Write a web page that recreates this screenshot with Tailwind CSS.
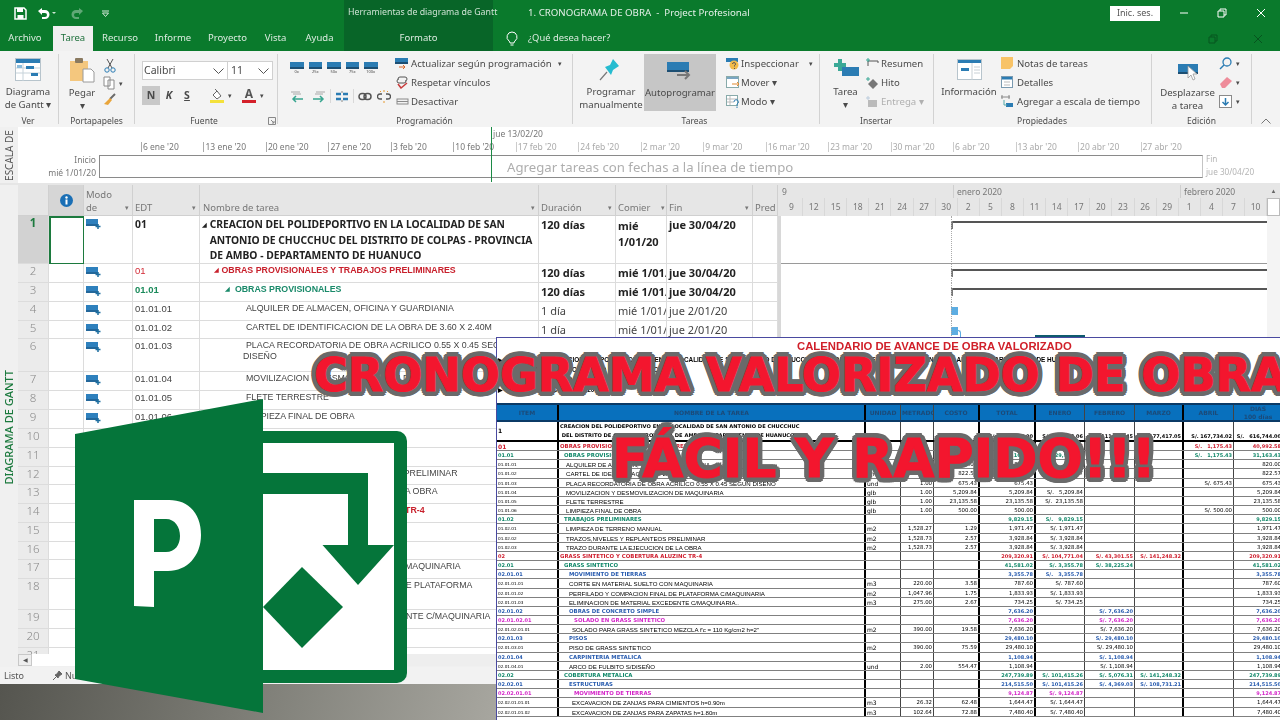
<!DOCTYPE html>
<html lang="es">
<head>
<meta charset="utf-8">
<title>Cronograma</title>
<script src="https://cdn.jsdelivr.net/npm/@tailwindcss/browser@4"></script>
</head>
<body class="m-0">
<div class="relative w-[1280px] h-[720px] overflow-hidden bg-[#f0f0f0] font-['Noto_Sans',sans-serif] text-[#444]">

  <!-- Title + tabs -->
  <header class="h-[51px] bg-[#0a7a2c] text-white blur-[0.4px]">
    <div class="flex h-[26px] items-center">
      <div class="flex w-[344px] items-center gap-[10px] pl-[14px]">
        <svg width="13" height="13" viewBox="0 0 13 13"><path d="M1 1h9l2 2v9H1z" fill="none" stroke="#fff" stroke-width="1.5"/><path d="M3 1h6v4H3zM3.500 8h6v4h-6z" fill="#fff"/></svg>
        <svg width="22" height="13" viewBox="0 0 22 13"><path d="M1 4l4-3v2h3a4 4 0 0 1 0 9H5V10h3a2 2 0 0 0 0-4H5v2z" fill="#fff"/><path d="M15 5h4l-2 2z" fill="#cfe6d5"/></svg>
        <svg width="20" height="13" viewBox="0 0 20 13" class="opacity-35"><path d="M14 4l-4-3v2H7a4 4 0 0 0 0 9h3V10H7a2 2 0 0 1 0-4h3v2z" fill="#fff"/></svg>
        <svg width="9" height="9" viewBox="0 0 9 9" class="ml-[2px]"><path d="M1 2h7M1.500 4h6L4.500 7.500z" stroke="#d5e8da" fill="none"/></svg>
      </div>
      <div class="flex h-full w-[149px] items-center whitespace-nowrap bg-[#086528] pl-[4px] text-[8.800px] text-[#cfe3d4]">Herramientas de diagrama de Gantt</div>
      <div class="ml-[35px] w-[582px] whitespace-nowrap text-[9.700px] text-[#e4f0e8]">1. CRONOGRAMA DE OBRA &nbsp;-&nbsp; Project Profesional</div>
      <div class="flex h-[15px] w-[50px] items-center justify-center bg-white text-[9px] text-[#555]">Inic. ses.</div>
      <div class="flex flex-1 items-center justify-around pl-[5px]">
        <svg width="10" height="10" viewBox="0 0 10 10"><path d="M1 5h8" stroke="#fff"/></svg>
        <svg width="10" height="10" viewBox="0 0 10 10"><path d="M1 3h6v6H1zM3 3V1h6v6H7" stroke="#fff" fill="none"/></svg>
        <svg width="10" height="10" viewBox="0 0 10 10"><path d="M1 1l8 8M9 1L1 9" stroke="#fff"/></svg>
      </div>
    </div>
    <nav class="flex h-[25px] items-center text-[9.500px] text-[#dcebe0]">
      <div class="w-[50px] text-center">Archivo</div>
      <div class="ml-[3px] flex h-full w-[40px] items-center justify-center bg-[#f0f0f0] text-[#1c6f3a]">Tarea</div>
      <div class="w-[54px] text-center">Recurso</div>
      <div class="w-[52px] text-center">Informe</div>
      <div class="w-[57px] text-center">Proyecto</div>
      <div class="w-[39px] text-center">Vista</div>
      <div class="w-[49px] text-center">Ayuda</div>
      <div class="flex h-full w-[149px] items-center justify-center bg-[#086528] text-[#dcebe0]">Formato</div>
      <svg class="ml-[13px]" width="12" height="15" viewBox="0 0 12 15"><path d="M6 1a5 5 0 0 0-3 9c.7.6 1 1.200 1 2h4c0-.8.3-1.400 1-2a5 5 0 0 0-3-9zM4.500 14h3" fill="none" stroke="#fff"/></svg>
      <div class="ml-[10px] text-[9.400px] text-[#dcebe0]">¿Qué desea hacer?</div>
      <div class="ml-auto flex w-[95px] items-center justify-around pl-[5px] opacity-30">
        <svg width="10" height="10" viewBox="0 0 10 10"><path d="M1 3h6v6H1zM3 3V1h6v6H7" stroke="#000" fill="none"/></svg>
        <svg width="10" height="10" viewBox="0 0 10 10"><path d="M1 1l8 8M9 1L1 9" stroke="#000"/></svg>
      </div>
    </nav>
  </header>

  <!-- Ribbon -->
  <section class="flex h-[76px] bg-[#f3f3f3] text-[9.600px] leading-[13px] text-[#4a4a4a] blur-[0.4px]">
    <!-- Ver -->
    <div class="flex w-[59px] flex-col border-r border-[#d2d2d2] mt-[3px] mb-[3px]">
      <div class="flex flex-1 flex-col items-center pr-[2px]">
        <svg class="mt-[4px]" width="26" height="23" viewBox="0 0 26 23"><rect x=".5" y=".5" width="25" height="22" fill="#fff" stroke="#b7c4cc"/><rect x="1" y="1" width="24" height="4" fill="#2b7cb3"/><path d="M8 5v18M1 10h24M1 15h24" stroke="#c7d3da"/><rect x="11" y="8" width="8" height="3" fill="#2b7cb3"/><rect x="16" y="15" width="7" height="3" fill="#2b7cb3"/><rect x="2" y="7" width="5" height="3" fill="#8bbcdc"/></svg>
        <div class="mt-[4px] text-center">Diagrama<br>de Gantt ▾</div>
      </div>
      <div class="-mb-[3px] h-[13px] pr-[2px] text-center text-[8.500px]">Ver</div>
    </div>
    <!-- Portapapeles -->
    <div class="flex w-[76px] flex-col border-r border-[#d2d2d2] mt-[3px] mb-[3px]">
      <div class="flex flex-1">
        <div class="flex w-[46px] flex-col items-center">
          <svg class="mt-[4px]" width="27" height="25" viewBox="0 0 27 25"><rect x="1" y="3" width="18" height="20" fill="#f4c77e"/><rect x="6" y="0" width="8" height="5" rx="1" fill="#8a7a60"/><path d="M14 11h8l3 3v10H14z" fill="#fff" stroke="#9a9a9a"/></svg>
          <div class="mt-[3px] text-center">Pegar<br>▾</div>
        </div>
        <div class="-ml-[2px] flex flex-col items-start gap-[3px] pt-[4px]">
          <svg width="14" height="15" viewBox="0 0 14 15"><path d="M4 1l5 9M10 1L5 10" stroke="#555" fill="none"/><circle cx="4" cy="12" r="2.200" fill="none" stroke="#2b7cb3"/><circle cx="10" cy="12" r="2.200" fill="none" stroke="#2b7cb3"/></svg>
          <div class="flex items-center gap-[4px]"><svg width="12" height="14" viewBox="0 0 12 14"><path d="M1 1h6v9H1zM5 4h6v9H5z" fill="#fff" stroke="#8a8a8a"/></svg><span class="text-[7px]">▾</span></div>
          <svg width="13" height="13" viewBox="0 0 13 13"><path d="M12 1L7 6" stroke="#6b6b6b" stroke-width="2"/><path d="M7 5l2 2-4 5-4-1z" fill="#e9a53b"/></svg>
        </div>
      </div>
      <div class="-mb-[3px] h-[13px] text-center text-[8.500px]">Portapapeles</div>
    </div>
    <!-- Fuente -->
    <div class="flex w-[143px] flex-col border-r border-[#d2d2d2] mt-[3px] mb-[3px]">
      <div class="flex flex-1 flex-col pl-[7px] pt-[7px]">
        <div class="flex h-[19px] w-[131px] border border-[#d0d0d0] bg-white text-[10.500px] leading-[17px]">
          <div class="flex w-[85px] items-center justify-between pl-[1px] pr-[3px] border-r border-[#d0d0d0]">Calibri<svg width="11" height="6" viewBox="0 0 11 6"><path d="M.5.5l5 5 5-5" fill="none" stroke="#555"/></svg></div>
          <div class="flex flex-1 items-center justify-between pl-[3px] pr-[3px]">11<svg width="11" height="6" viewBox="0 0 11 6"><path d="M.5.5l5 5 5-5" fill="none" stroke="#555"/></svg></div>
        </div>
        <div class="mt-[6px] flex h-[19px] items-center text-[10.500px]">
          <div class="flex h-[19px] w-[18px] items-center justify-center bg-[#c8c8c8] font-bold">N</div>
          <div class="w-[18px] text-center font-bold italic">K</div>
          <div class="w-[18px] text-center font-bold underline">S</div>
          <svg class="ml-[14px]" width="14" height="15" viewBox="0 0 14 15"><path d="M3 7l4-4 4 5-4 3z" fill="#fff" stroke="#666"/><path d="M5 1l3 3" stroke="#666"/><rect x="0" y="12" width="14" height="3" fill="#f4e13b"/></svg>
          <span class="ml-[4px] text-[7px]">▾</span>
          <div class="ml-[10px] flex w-[14px] flex-col items-center text-[12px] leading-[12px] font-bold text-[#555]">A<span class="h-[3px] w-[14px] bg-[#d4202a]"></span></div>
          <span class="ml-[4px] text-[7px]">▾</span>
        </div>
      </div>
      <div class="-mb-[3px] flex h-[13px] items-center text-[8.500px]"><span class="flex-1 pl-[5px] text-center">Fuente</span><svg class="mr-[1px]" width="8" height="8" viewBox="0 0 8 8"><path d="M.5.5h7v7h-7zM3 3l3 3M6 4v2H4" fill="none" stroke="#888"/></svg></div>
    </div>
    <!-- Programacion -->
    <div class="flex w-[295px] flex-col border-r border-[#d2d2d2] mt-[3px] mb-[3px]">
      <div class="flex flex-1">
        <div class="w-[117px] pl-[12px] pt-[8px]">
          <div class="flex gap-[5px]">
            <div class="flex w-[13.500px] flex-col items-center"><span class="h-[5px] w-full bg-[#2b7cb3]"></span><span class="h-[2px] w-full bg-[#1d4f73]"></span><span class="text-[4px] leading-[5px]">0x</span></div>
            <div class="flex w-[13.500px] flex-col items-center"><span class="h-[5px] w-full bg-[#2b7cb3]"></span><span class="h-[2px] w-full bg-[#1d4f73]"></span><span class="text-[4px] leading-[5px]">25x</span></div>
            <div class="flex w-[13.500px] flex-col items-center"><span class="h-[5px] w-full bg-[#2b7cb3]"></span><span class="h-[2px] w-full bg-[#1d4f73]"></span><span class="text-[4px] leading-[5px]">50x</span></div>
            <div class="flex w-[13.500px] flex-col items-center"><span class="h-[5px] w-full bg-[#2b7cb3]"></span><span class="h-[2px] w-full bg-[#1d4f73]"></span><span class="text-[4px] leading-[5px]">75x</span></div>
            <div class="flex w-[13.500px] flex-col items-center"><span class="h-[5px] w-full bg-[#2b7cb3]"></span><span class="h-[2px] w-full bg-[#1d4f73]"></span><span class="text-[4px] leading-[5px]">100x</span></div>
          </div>
          <div class="mt-[15px] flex items-center gap-[1px]">
            <svg width="14" height="13" viewBox="0 0 14 13"><path d="M1 2h9M3 4h8" stroke="#a8a8a8"/><path d="M13 9H3m3-3L3 9l3 3" fill="none" stroke="#37a58f" stroke-width="1.500"/></svg>
            <svg class="ml-[7px]" width="14" height="13" viewBox="0 0 14 13"><path d="M4 2h9M3 4h8" stroke="#a8a8a8"/><path d="M1 9h10m-3-3l3 3-3 3" fill="none" stroke="#37a58f" stroke-width="1.500"/></svg>
            <span class="mx-[3px] h-[14px] w-px bg-[#d8d8d8]"></span>
            <svg width="14" height="13" viewBox="0 0 14 13"><path d="M1 4h5M8 4h5M1 9h5M8 9h5" stroke="#2b7cb3" stroke-width="2.500"/><path d="M7 1v2M7 10v2" stroke="#888"/></svg>
            <span class="mx-[3px] h-[14px] w-px bg-[#d8d8d8]"></span>
            <svg width="14" height="13" viewBox="0 0 14 13"><rect x="1" y="3.500" width="7" height="6" rx="3" fill="none" stroke="#555" stroke-width="1.500"/><rect x="6" y="3.500" width="7" height="6" rx="3" fill="none" stroke="#555" stroke-width="1.500"/></svg>
            <svg class="ml-[4px]" width="14" height="13" viewBox="0 0 14 13"><path d="M5 4H3a2.500 2.500 0 0 0 0 5h2M9 4h2a2.500 2.500 0 0 1 0 5H9" fill="none" stroke="#555" stroke-width="1.300"/><path d="M7 0v2M7 11v2M3 1l1 1M11 1l-1 1" stroke="#e89a2e"/></svg>
          </div>
        </div>
        <div class="flex w-[177px] flex-col gap-[6px] pt-[3px]">
          <div class="flex h-[13px] items-center gap-[2px]"><svg width="14" height="13" viewBox="0 0 14 13"><rect x="0" y="1" width="13" height="5" fill="#2b7cb3"/><rect y="5" x="0" width="13" height="2" fill="#1d4f73"/><path d="M4 10h6m-2-2l2 2-2 2" stroke="#d9682b" fill="none"/></svg><span class="flex-1 whitespace-nowrap">Actualizar según programación</span><span class="pr-[10px] text-[7px]">▾</span></div>
          <div class="flex h-[13px] items-center gap-[2px]"><svg width="14" height="13" viewBox="0 0 14 13"><path d="M3 3a2 2 0 0 1 2-2h5a2 2 0 0 1 0 4M11 5a2 2 0 0 1-2 2H4a2 2 0 0 1 0-4" fill="none" stroke="#555"/><path d="M3 8l3 4 6-5" fill="none" stroke="#c83c3c" stroke-width="1.500"/></svg><span>Respetar vínculos</span></div>
          <div class="flex h-[13px] items-center gap-[2px]"><svg width="14" height="13" viewBox="0 0 14 13"><rect x="2" y="4" width="11" height="5" fill="none" stroke="#8a8a8a"/><path d="M2 6.500h11" stroke="#8a8a8a"/></svg><span>Desactivar</span></div>
        </div>
      </div>
      <div class="-mb-[3px] h-[13px] pr-[1px] text-center text-[8.500px]">Programación</div>
    </div>
    <!-- Tareas -->
    <div class="flex w-[247px] flex-col border-r border-[#d2d2d2] mt-[3px] mb-[3px]">
      <div class="flex flex-1 pl-[5px]">
        <div class="flex w-[66px] flex-col items-center pt-[4px]">
          <svg width="24" height="23" viewBox="0 0 24 23"><path d="M1 22l7-8" stroke="#777" stroke-width="1.200"/><path d="M6 9l6 8 2-5 6-4-6-7-3 6z" fill="#26bcd0"/></svg>
          <div class="mt-[4px] whitespace-nowrap text-center">Programar<br>manualmente</div>
        </div>
        <div class="flex h-[57px] w-[72px] flex-col items-center bg-[#c6c6c6] pt-[8px]">
          <svg width="26" height="19" viewBox="0 0 26 19"><rect width="22" height="8" fill="#2b7cb3"/><rect y="8" width="22" height="2" fill="#1d4f73"/><path d="M10 13h12m-4-4l4 4-4 4" fill="none" stroke="#777" stroke-width="2"/></svg>
          <div class="mt-[5px] whitespace-nowrap text-center">Autoprogramar</div>
        </div>
        <div class="ml-[10px] flex flex-col gap-[6px] pt-[3px]">
          <div class="flex h-[13px] items-center gap-[1px]"><svg width="14" height="13" viewBox="0 0 14 13"><rect y="1" width="12" height="4" fill="#2b7cb3"/><circle cx="8" cy="8" r="4.500" fill="#f2bb49"/><path d="M6.500 7a1.500 1.500 0 1 1 2 1.500V9.500M8.500 11v1" stroke="#555" fill="none"/></svg><span class="w-[67px]">Inspeccionar</span><span class="text-[7px]">▾</span></div>
          <div class="flex h-[13px] items-center gap-[1px]"><svg width="14" height="13" viewBox="0 0 14 13"><rect x=".5" y=".5" width="12" height="11" fill="#fff" stroke="#8aa"/><rect x="1" y="1" width="11" height="2" fill="#7aa6c2"/><path d="M6 8h7m-2-2l2 2-2 2" stroke="#e08a30" fill="none"/></svg><span>Mover ▾</span></div>
          <div class="flex h-[13px] items-center gap-[1px]"><svg width="14" height="13" viewBox="0 0 14 13"><rect x=".5" y=".5" width="11" height="10" fill="#fff" stroke="#8aa"/><path d="M1 4h10M1 7h7M4 1v9" stroke="#bbb"/><path d="M8 7a2.200 2.200 0 1 1 3 2v1.500M11 11.500v1.500" stroke="#2b7cb3" fill="none"/></svg><span>Modo ▾</span></div>
        </div>
      </div>
      <div class="-mb-[3px] h-[13px] pr-[3px] text-center text-[8.500px]">Tareas</div>
    </div>
    <!-- Insertar -->
    <div class="flex w-[114px] flex-col border-r border-[#d2d2d2] mt-[3px] mb-[3px]">
      <div class="flex flex-1 pl-[12px]">
        <div class="flex w-[27px] flex-col items-center pt-[4px]">
          <svg width="26" height="19" viewBox="0 0 26 19"><path d="M5 1h4v4h4v4H9v4H5V9H1V5h4z" fill="#3aa896"/><rect x="9" y="9" width="17" height="9" fill="#2b7cb3"/></svg>
          <div class="mt-[8px] text-center">Tarea<br>▾</div>
        </div>
        <div class="ml-[6px] flex flex-col gap-[6px] pt-[3px]">
          <div class="flex h-[13px] items-center gap-[2px]"><svg width="14" height="13" viewBox="0 0 14 13"><path d="M3 4h10M3 4v5M13 4v2" stroke="#555" fill="none"/><path d="M3 1v4M1 3h4" stroke="#3aa896"/></svg><span>Resumen</span></div>
          <div class="flex h-[13px] items-center gap-[2px]"><svg width="14" height="13" viewBox="0 0 14 13"><path d="M8 3l5 5-5 5-5-5z" fill="#777"/><path d="M3 1v4M1 3h4" stroke="#3aa896"/></svg><span>Hito</span></div>
          <div class="flex h-[13px] items-center gap-[2px] text-[#b0b0b0]"><svg width="14" height="13" viewBox="0 0 14 13"><path d="M3 5h9v7H3z" fill="#bbb"/><path d="M3 1v4M1 3h4" stroke="#bcd"/></svg><span>Entrega ▾</span></div>
        </div>
      </div>
      <div class="-mb-[3px] h-[13px] pr-[1px] text-center text-[8.500px]">Insertar</div>
    </div>
    <!-- Propiedades -->
    <div class="flex w-[218px] flex-col border-r border-[#d2d2d2] mt-[3px] mb-[3px]">
      <div class="flex flex-1">
        <div class="flex w-[70px] flex-col items-center pt-[5px]">
          <svg width="25" height="21" viewBox="0 0 25 21"><rect x=".5" y=".5" width="24" height="20" fill="#fff" stroke="#b7c4cc"/><rect x="1" y="1" width="23" height="3" fill="#2b7cb3"/><rect x="4" y="9" width="8" height="3" fill="#2b7cb3"/><path d="M15 4v17M17 8h6M17 11h6M17 14h6" stroke="#c8d0d5"/></svg>
          <div class="mt-[5px] whitespace-nowrap text-center">Información</div>
        </div>
        <div class="-ml-[3px] flex flex-col gap-[6px] pt-[3px]">
          <div class="flex h-[13px] items-center gap-[4px]"><svg width="12" height="13" viewBox="0 0 12 13"><path d="M0 0h12v9L9 12H0z" fill="#f8c367"/></svg><span>Notas de tareas</span></div>
          <div class="flex h-[13px] items-center gap-[4px]"><svg width="12" height="13" viewBox="0 0 12 13"><rect x=".5" y=".5" width="11" height="11" fill="#fff" stroke="#7a9ab0"/><rect x="1" y="1" width="10" height="2.500" fill="#2b7cb3"/><path d="M3 6h6M3 9h6" stroke="#bbb"/></svg><span>Detalles</span></div>
          <div class="flex h-[13px] items-center gap-[4px] whitespace-nowrap"><svg width="12" height="13" viewBox="0 0 12 13"><path d="M0 2h9M1 0v4M8 0v4" stroke="#888" fill="none"/><rect x="5" y="8" width="7" height="4" fill="#2b7cb3"/><path d="M3 5v5h3" stroke="#5aa" fill="none"/></svg><span>Agregar a escala de tiempo</span></div>
        </div>
      </div>
      <div class="-mb-[3px] h-[13px] pr-[1px] text-center text-[8.500px]">Propiedades</div>
    </div>
    <!-- Edición -->
    <div class="flex w-[100px] flex-col border-r border-[#d2d2d2] mt-[3px] mb-[3px]">
      <div class="flex flex-1">
        <div class="flex w-[70px] flex-col items-center pl-[1px] pt-[10px]">
          <svg width="24" height="19" viewBox="0 0 24 19"><rect x="2" y="0" width="20" height="8" fill="#2b7cb3"/><rect x="2" y="8" width="20" height="2" fill="#1d4f73"/><path d="M12 2v12l3-3 2 5 2-1-2-5h4z" fill="#fff" stroke="#999" stroke-width=".8"/></svg>
          <div class="mt-[3px] whitespace-nowrap text-center">Desplazarse<br>a tarea</div>
        </div>
        <div class="ml-[-3px] flex flex-col gap-[6px] pt-[3px]">
          <div class="flex h-[13px] items-center gap-[3px]"><svg width="14" height="13" viewBox="0 0 14 13"><circle cx="8" cy="5" r="4" fill="none" stroke="#2b7cb3" stroke-width="1.300"/><path d="M5 8l-4 4" stroke="#2b7cb3" stroke-width="1.500"/></svg><span class="text-[7px]">▾</span></div>
          <div class="flex h-[13px] items-center gap-[3px]"><svg width="14" height="13" viewBox="0 0 14 13"><path d="M1 8l7-7 5 4-7 7H3z" fill="#ee8c9a"/></svg><span class="text-[7px]">▾</span></div>
          <div class="flex h-[13px] items-center gap-[3px]"><svg width="14" height="13" viewBox="0 0 14 13"><rect x=".5" y=".5" width="12" height="12" fill="#fff" stroke="#8a8a8a"/><path d="M6.500 3v6m-3-2l3 3 3-3" stroke="#2b7cb3" stroke-width="1.500" fill="none"/></svg><span class="text-[7px]">▾</span></div>
        </div>
      </div>
      <div class="-mb-[3px] h-[13px] text-center text-[8.500px]">Edición</div>
    </div>
    <div class="flex flex-1 items-end justify-center pb-[3px]"><svg width="10" height="6" viewBox="0 0 10 6"><path d="M.5 5.500l4.500-4.500 4.500 4.500" stroke="#777" fill="none"/></svg></div>
  </section>

  <!-- Timeline -->
  <section class="relative flex h-[56px] bg-white text-[#777] blur-[0.4px]">
    <div class="flex w-[18px] items-center justify-center bg-[#f0f0f0]"><span class="-rotate-90 whitespace-nowrap text-[10px] text-[#555]">ESCALA DE</span></div>
    <div class="w-[81px] pr-[3px] pt-[26px] text-right text-[8.500px] leading-[13px]">Inicio<br>mié 1/01/20</div>
    <div class="w-[1104px]">
      <div class="flex h-[28px] items-end pb-[3px] pl-[42px] text-[8.500px] leading-[10px] whitespace-nowrap">
        <div class="w-[64.300px] border-l border-[#aaa] pl-[1px]">6 ene '20</div>
        <div class="w-[64.300px] border-l border-[#aaa] pl-[1px]">13 ene '20</div>
        <div class="w-[64.300px] border-l border-[#aaa] pl-[1px]">20 ene '20</div>
        <div class="w-[64.300px] border-l border-[#aaa] pl-[1px]">27 ene '20</div>
        <div class="w-[64.300px] border-l border-[#aaa] pl-[1px]">3 feb '20</div>
        <div class="w-[64.300px] border-l border-[#aaa] pl-[1px]">10 feb '20</div>
        <div class="w-[64.300px] border-l border-[#ccc] pl-[1px] text-[#aaa]">17 feb '20</div>
        <div class="w-[64.300px] border-l border-[#ccc] pl-[1px] text-[#aaa]">24 feb '20</div>
        <div class="w-[64.300px] border-l border-[#ccc] pl-[1px] text-[#aaa]">2 mar '20</div>
        <div class="w-[64.300px] border-l border-[#ccc] pl-[1px] text-[#aaa]">9 mar '20</div>
        <div class="w-[64.300px] border-l border-[#ccc] pl-[1px] text-[#aaa]">16 mar '20</div>
        <div class="w-[64.300px] border-l border-[#ccc] pl-[1px] text-[#aaa]">23 mar '20</div>
        <div class="w-[64.300px] border-l border-[#ccc] pl-[1px] text-[#aaa]">30 mar '20</div>
        <div class="w-[64.300px] border-l border-[#ccc] pl-[1px] text-[#aaa]">6 abr '20</div>
        <div class="w-[64.300px] border-l border-[#ccc] pl-[1px] text-[#aaa]">13 abr '20</div>
        <div class="w-[64.300px] border-l border-[#ccc] pl-[1px] text-[#aaa]">20 abr '20</div>
        <div class="w-[64.300px] border-l border-[#ccc] pl-[1px] text-[#aaa]">27 abr '20</div>
      </div>
      <div class="h-[23px] border border-[#8a8a8a] border-r-[#c4c4c4] pl-[407px] text-[13.200px] leading-[22px] text-[#aeaeae]">Agregar tareas con fechas a la línea de tiempo</div>
    </div>
    <div class="flex-1 pl-[3px] pt-[25px] text-[8.200px] leading-[13px] text-[#b5b5b5]">Fin<br>jue 30/04/20</div>
    <div class="absolute left-[491px] top-0 h-[55px] w-px bg-[#1c8a46]"></div>
    <div class="absolute left-[493px] top-[2px] text-[8.500px] leading-[10px]">jue 13/02/20</div>
  </section>
  <div class="h-[2px] bg-[#e6e6e6]"></div>

  <!-- Gantt -->
  <section class="relative flex h-[482px] bg-[#f0f0f0] blur-[0.4px]">
    <div class="flex w-[18px] items-start justify-center pt-[234px]"><span class="-rotate-90 whitespace-nowrap text-[11px] font-medium text-[#1c7a3e]">DIAGRAMA DE GANTT</span></div>
    <div class="flex-1 overflow-hidden text-[#444]
      [&>div]:grid [&>div]:grid-cols-[31px_35px_49px_67px_339px_77px_51px_86px_25px_3px_486px_13px]
      [&>div>div]:overflow-hidden [&>div>div]:whitespace-nowrap [&>div>div]:border-r [&>div>div]:border-b [&>div>div]:border-[#dcdcdc]
      [&>div>div]:bg-white [&>div>div:nth-child(1)]:bg-[#ebebeb] [&>div>div:nth-child(1)]:text-center [&>div>div:nth-child(1)]:text-[11.500px] [&>div>div:nth-child(1)]:leading-[14px] [&>div>div:nth-child(1)]:text-[#8a8a8a] [&>div>div:nth-child(1)]:font-light
      [&>div>div:nth-child(10)]:bg-[#d8d8d8] [&>div>div:nth-child(12)]:bg-[#f4f4f4] [&>div>div:nth-child(11)]:border-r-0 [&>div>div:nth-child(11)]:border-b-0 [&>div>div:nth-child(11)]:relative [&>div>div:nth-child(10)]:border-0 [&>div>div:nth-child(12)]:border-0
      [&>div>div:nth-child(6)]:text-[11px] [&>div>div:nth-child(7)]:text-[11px] [&>div>div:nth-child(8)]:text-[11px] [&>div>div:nth-child(6)]:leading-[17px] [&>div>div:nth-child(7)]:leading-[17px] [&>div>div:nth-child(8)]:leading-[17px] [&>div>div:nth-child(6)]:pl-[2px] [&>div>div:nth-child(7)]:pl-[2px] [&>div>div:nth-child(8)]:pl-[2px] [&>div>div:nth-child(3)]:pl-[2px] [&>div>div:nth-child(5)]:font-['Liberation_Sans',sans-serif] [&>div>div:nth-child(5)]:text-[8.800px] [&>div>div:nth-child(5)]:leading-[13px] [&>div>div:nth-child(4)]:font-['Liberation_Sans',sans-serif] [&>div>div:nth-child(4)]:text-[9.500px] [&>div>div:nth-child(4)]:leading-[13px] [&>div>div:nth-child(4)]:pl-[2px]
      [&_svg.mode]:mt-[3px]">

      <!-- column header -->
      <div class="h-[31px] [&>div]:!bg-[#e6e6e6] [&>div]:!font-['Noto_Sans',sans-serif] [&>div]:!text-[9.500px] [&>div]:!text-[#777] [&>div]:!leading-[13px] [&>div]:!border-[#d0d0d0]">
        <div></div>
        <div><div class="flex h-full w-full items-center justify-center bg-[#d6d6d6]"><svg width="13" height="13" viewBox="0 0 13 13"><circle cx="6.500" cy="6.500" r="6.500" fill="#1a6fb5"/><rect x="5.500" y="5.500" width="2" height="5" fill="#fff"/><circle cx="6.500" cy="3.500" r="1.200" fill="#fff"/></svg></div></div>
        <div class="flex items-end justify-between pr-[3px] pb-[1px]"><span>Modo<br>de</span><span class="text-[7px]">▾</span></div>
        <div class="flex items-end justify-between pr-[3px] pb-[1px]"><span>EDT</span><span class="text-[7px]">▾</span></div>
        <div class="flex items-end justify-between pl-[3px] pr-[3px] pb-[1px]"><span>Nombre de tarea</span><span class="text-[7px]">▾</span></div>
        <div class="flex items-end justify-between pr-[3px] pb-[1px]"><span>Duración</span><span class="text-[7px]">▾</span></div>
        <div class="flex items-end justify-between pr-[1px] pb-[1px]"><span>Comier</span><span class="text-[7px]">▾</span></div>
        <div class="flex items-end justify-between pr-[3px] pb-[1px]"><span>Fin</span><span class="text-[7px]">▾</span></div>
        <div class="flex items-end pl-[2px] pb-[1px]">Pred</div>
        <div></div>
        <div class="flex flex-col !border-0">
          <div class="flex h-[13px] text-[8.500px]"><span class="w-[172px] pl-[1px]">9</span><span class="w-[227px] border-l border-[#cfcfcf] pl-[3px]">enero 2020</span><span class="border-l border-[#cfcfcf] pl-[3px]">febrero 2020</span></div>
          <div class="flex flex-1 text-center text-[8.500px] [&>span]:flex-1 [&>span]:border-r [&>span]:border-[#d8d8d8] [&>span]:leading-[18px]"><span>9</span><span>12</span><span>15</span><span>18</span><span>21</span><span>24</span><span>27</span><span>30</span><span>2</span><span>5</span><span>8</span><span>11</span><span>14</span><span>17</span><span>20</span><span>23</span><span>26</span><span>29</span><span>1</span><span>4</span><span>7</span><span>10</span></div>
        </div>
        <div class="!border-0 text-center"><span class="block h-[13px] text-[6px] leading-[13px] text-[#666]">▲</span><span class="block h-[18px] border border-[#bbb] bg-white"></span></div>
      </div>

      <!-- row 1 -->
      <div class="h-[48px] [&>div]:border-b-[#9a9a9a]">
        <div class="!bg-[#d2d2d2] !font-bold !text-[#1c7a3e]">1</div>
        <div class="border-2 !border-[#1c7a3e]"></div>
        <div class="pl-[3px]"><svg class="mode" width="15" height="11" viewBox="0 0 15 11"><rect width="12" height="5" fill="#2e80bd"/><rect y="5" width="12" height="2" fill="#23679a"/><path d="M12 5v5M9.500 7.500h5" stroke="#1d6ea0" stroke-width="1.500"/></svg></div>
        <div class="!font-['Noto_Sans',sans-serif] !text-[10.300px] font-bold pt-[2px] text-[#222]">01</div>
        <div class="!font-['Noto_Sans',sans-serif] !text-[10.300px] font-bold text-[#222] !leading-[15.500px] pt-[1px] pl-[2px] !whitespace-nowrap"><span class="text-[6px] align-[1px]">◢</span> <span class="inline-block align-top">CREACION DEL POLIDEPORTIVO EN LA LOCALIDAD DE SAN<br>ANTONIO DE CHUCCHUC DEL DISTRITO DE COLPAS - PROVINCIA<br>DE AMBO - DEPARTAMENTO DE HUANUCO</span></div>
        <div class="font-bold text-[#222]">120 días</div>
        <div class="font-bold !leading-[15.500px] pt-[2px] text-[#222]">mié<br>1/01/20</div>
        <div class="font-bold text-[#222]">jue 30/04/20</div>
        <div></div><div></div>
        <div><span class="absolute left-[170px] top-[5px] h-[2px] w-[316px] bg-[#555]"></span><span class="absolute left-[169.500px] top-[5px] h-[8px] w-[2px] bg-[#777]"></span><span class="absolute left-[170px] top-0 h-[48px] border-l border-dotted border-[#aaa]"></span><span class="absolute inset-x-0 bottom-0 h-px bg-[#9a9a9a]"></span></div>
        <div></div>
      </div>

      <!-- row 2 -->
      <div class="h-[18.500px]">
        <div>2</div><div></div>
        <div class="pl-[3px]"><svg class="mode" width="15" height="11" viewBox="0 0 15 11"><rect width="12" height="5" fill="#2e80bd"/><rect y="5" width="12" height="2" fill="#23679a"/><path d="M12 5v5M9.500 7.500h5" stroke="#1d6ea0" stroke-width="1.500"/></svg></div>
        <div class="text-[#d22a35]">01</div>
        <div class="pl-[14px] font-bold text-[#c8202c]"><span class="text-[6px] align-[1px]">◢</span> OBRAS PROVISIONALES Y TRABAJOS PRELIMINARES</div>
        <div class="font-bold text-[#222]">120 días</div><div class="font-bold text-[#222]">mié 1/01/</div><div class="font-bold text-[#222]">jue 30/04/20</div>
        <div></div><div></div>
        <div><span class="absolute left-[170px] top-[5px] h-[2px] w-[316px] bg-[#555]"></span><span class="absolute left-[169.500px] top-[5px] h-[8px] w-[2px] bg-[#777]"></span><span class="absolute left-[170px] top-0 h-[19px] border-l border-dotted border-[#aaa]"></span></div>
        <div></div>
      </div>
      <!-- row 3 -->
      <div class="h-[19px]">
        <div>3</div><div></div>
        <div class="pl-[3px]"><svg class="mode" width="15" height="11" viewBox="0 0 15 11"><rect width="12" height="5" fill="#2e80bd"/><rect y="5" width="12" height="2" fill="#23679a"/><path d="M12 5v5M9.500 7.500h5" stroke="#1d6ea0" stroke-width="1.500"/></svg></div>
        <div class="font-bold text-[#1a8a5a]">01.01</div>
        <div class="pl-[25px] font-bold text-[#1a8a6a]"><span class="text-[6px] align-[1px]">◢</span> &nbsp;OBRAS PROVISIONALES</div>
        <div class="font-bold text-[#222]">120 días</div><div class="font-bold text-[#222]">mié 1/01/</div><div class="font-bold text-[#222]">jue 30/04/20</div>
        <div></div><div></div>
        <div><span class="absolute left-[170px] top-[5px] h-[2px] w-[316px] bg-[#555]"></span><span class="absolute left-[169.500px] top-[5px] h-[8px] w-[2px] bg-[#777]"></span><span class="absolute left-[170px] top-0 h-[19px] border-l border-dotted border-[#aaa]"></span></div>
        <div></div>
      </div>
      <!-- row 4 -->
      <div class="h-[19px]">
        <div>4</div><div></div>
        <div class="pl-[3px]"><svg class="mode" width="15" height="11" viewBox="0 0 15 11"><rect width="12" height="5" fill="#2e80bd"/><rect y="5" width="12" height="2" fill="#23679a"/><path d="M12 5v5M9.500 7.500h5" stroke="#1d6ea0" stroke-width="1.500"/></svg></div>
        <div>01.01.01</div>
        <div class="pl-[46px]">ALQUILER DE ALMACEN, OFICINA Y GUARDIANIA</div>
        <div>1 día</div><div>mié 1/01/</div><div>jue 2/01/20</div>
        <div></div><div></div>
        <div><span class="absolute left-[170px] top-[5px] h-[8px] w-[7px] bg-[#5dade2]"></span><span class="absolute left-[170px] top-0 h-[19px] border-l border-dotted border-[#aaa]"></span></div>
        <div></div>
      </div>
      <!-- row 5 -->
      <div class="h-[18.500px]">
        <div>5</div><div></div>
        <div class="pl-[3px]"><svg class="mode" width="15" height="11" viewBox="0 0 15 11"><rect width="12" height="5" fill="#2e80bd"/><rect y="5" width="12" height="2" fill="#23679a"/><path d="M12 5v5M9.500 7.500h5" stroke="#1d6ea0" stroke-width="1.500"/></svg></div>
        <div>01.01.02</div>
        <div class="pl-[46px]">CARTEL DE IDENTIFICACION DE LA OBRA DE 3.60 X 2.40M</div>
        <div>1 día</div><div>mié 1/01/</div><div>jue 2/01/20</div>
        <div></div><div></div>
        <div><span class="absolute left-[170px] top-[6px] h-[8px] w-[7px] bg-[#5dade2]"></span><span class="absolute left-[177px] top-[9px] h-[9px] w-[3px] rounded-tr-sm border-t border-r border-[#5dade2]"></span><span class="absolute left-[170px] top-0 h-[19px] border-l border-dotted border-[#aaa]"></span></div>
        <div></div>
      </div>
      <!-- row 6 -->
      <div class="h-[33px]">
        <div>6</div><div></div>
        <div class="pl-[3px]"><svg class="mode" width="15" height="11" viewBox="0 0 15 11"><rect width="12" height="5" fill="#2e80bd"/><rect y="5" width="12" height="2" fill="#23679a"/><path d="M12 5v5M9.500 7.500h5" stroke="#1d6ea0" stroke-width="1.500"/></svg></div>
        <div>01.01.03</div>
        <div class="pl-[46px] !leading-[11px] pt-[1px]">PLACA RECORDATORIA DE OBRA ACRILICO 0.55 X 0.45 SEGÚN<br><span class="-ml-[3px]">DISEÑO</span></div>
        <div></div><div></div><div></div><div></div><div></div><div></div><div></div>
      </div>
      <!-- row 7 -->
      <div class="h-[19px]">
        <div>7</div><div></div>
        <div class="pl-[3px]"><svg class="mode" width="15" height="11" viewBox="0 0 15 11"><rect width="12" height="5" fill="#2e80bd"/><rect y="5" width="12" height="2" fill="#23679a"/><path d="M12 5v5M9.500 7.500h5" stroke="#1d6ea0" stroke-width="1.500"/></svg></div>
        <div>01.01.04</div>
        <div class="pl-[46px]">MOVILIZACION Y DESMOVILIZACION DE MAQUINARIA</div>
        <div></div><div></div><div></div><div></div><div></div><div></div><div></div>
      </div>
      <!-- row 8 -->
      <div class="h-[18.500px]">
        <div>8</div><div></div>
        <div class="pl-[3px]"><svg class="mode" width="15" height="11" viewBox="0 0 15 11"><rect width="12" height="5" fill="#2e80bd"/><rect y="5" width="12" height="2" fill="#23679a"/><path d="M12 5v5M9.500 7.500h5" stroke="#1d6ea0" stroke-width="1.500"/></svg></div>
        <div>01.01.05</div>
        <div class="pl-[46px]">FLETE TERRESTRE</div>
        <div></div><div></div><div></div><div></div><div></div><div></div><div></div>
      </div>
      <!-- row 9 -->
      <div class="h-[19px]">
        <div>9</div><div></div>
        <div class="pl-[3px]"><svg class="mode" width="15" height="11" viewBox="0 0 15 11"><rect width="12" height="5" fill="#2e80bd"/><rect y="5" width="12" height="2" fill="#23679a"/><path d="M12 5v5M9.500 7.500h5" stroke="#1d6ea0" stroke-width="1.500"/></svg></div>
        <div>01.01.06</div>
        <div class="pl-[46px]">LIMPIEZA FINAL DE OBRA</div>
        <div></div><div></div><div></div><div></div><div></div><div></div><div></div>
      </div>
      <div class="h-[19px]"><div>10</div><div></div><div></div><div>01.02</div><div class="pl-[24px] font-bold text-[#1a8a6a]">TRABAJOS PRELIMINARES</div><div></div><div></div><div></div><div></div><div></div><div></div><div></div></div>
      <div class="h-[19px]"><div>11</div><div></div><div></div><div>01.02.01</div><div class="pl-[46px]">LIMPIEZA DE TERRENO MANUAL</div><div></div><div></div><div></div><div></div><div></div><div></div><div></div></div>
      <div class="h-[18.500px]"><div>12</div><div></div><div></div><div>01.02.02</div><div class="pl-[54px]">TRAZOS, NIVELES Y REPLANTEOS PRELIMINAR</div><div></div><div></div><div></div><div></div><div></div><div></div><div></div></div>
      <div class="h-[19px]"><div>13</div><div></div><div></div><div>01.02.03</div><div class="pl-[42px]">TRAZO DURANTE LA EJECUCION DE LA OBRA</div><div></div><div></div><div></div><div></div><div></div><div></div><div></div></div>
      <div class="h-[18.500px]"><div>14</div><div></div><div></div><div>02</div><div class="pl-[15px] font-bold text-[#c8202c]">GRASS SINTETICO Y COBERTURA ALUZINC TR-4</div><div></div><div></div><div></div><div></div><div></div><div></div><div></div></div>
      <div class="h-[19px]"><div>15</div><div></div><div></div><div>02.01</div><div class="pl-[24px] font-bold text-[#1a8a6a]">GRASS SINTETICO</div><div></div><div></div><div></div><div></div><div></div><div></div><div></div></div>
      <div class="h-[18.500px]"><div>16</div><div></div><div></div><div>02.01.01</div><div class="pl-[35px] font-bold text-[#2a5db0]">MOVIMIENTO DE TIERRAS</div><div></div><div></div><div></div><div></div><div></div><div></div><div></div></div>
      <div class="h-[19px]"><div>17</div><div></div><div></div><div>02.01.01.01</div><div class="pl-[53px]">CORTE EN MATERIAL SUELTO CON MAQUINARIA</div><div></div><div></div><div></div><div></div><div></div><div></div><div></div></div>
      <div class="h-[31px]"><div>18</div><div></div><div></div><div>02.01.01.02</div><div class="pl-[56px]">PERFILADO Y COMPACION FINAL DE PLATAFORMA</div><div></div><div></div><div></div><div></div><div></div><div></div><div></div></div>
      <div class="h-[19px]"><div>19</div><div></div><div></div><div>02.01.01.03</div><div class="pl-[50px]">ELIMINACION DE MATERIAL EXCEDENTE C/MAQUINARIA</div><div></div><div></div><div></div><div></div><div></div><div></div><div></div></div>
      <div class="h-[19px]"><div>20</div><div></div><div></div><div></div><div></div><div></div><div></div><div></div><div></div><div></div><div></div><div></div></div>
      <div class="h-[9px]"><div>21</div><div></div><div></div><div></div><div></div><div></div><div></div><div></div><div></div><div></div><div></div><div></div></div>
    </div>
    <!-- horizontal scroll -->
    <div class="absolute bottom-[1px] left-[18px] flex h-[12px] w-[1262px] items-center bg-[#eeeeee]"><span class="flex h-[12px] w-[14px] items-center justify-center border border-[#c8c8c8] text-[6px] leading-[10px] text-[#555]">◀</span><span class="h-[12px] w-[300px] bg-white"></span></div>
  </section>

  <!-- Status -->
  <footer class="flex h-[17px] items-center bg-[#f2f2f2] pl-[4px] text-[9px] text-[#555] blur-[0.4px]">
    <span class="w-[48px]">Listo</span>
    <svg width="11" height="11" viewBox="0 0 11 11"><path d="M1 10l3-3M3 5l3 3 1-2 3-2-3-3-2 3z" fill="#666" stroke="#666"/></svg>
    <span class="ml-[2px]">Nuevas tareas</span>
  </footer>
  <div class="h-[36px] bg-[linear-gradient(105deg,#55554f,#7a7a73_18%,#a9a8a1_40%,#bdbcb5_60%,#a8a7a0)]"></div>

  <!-- Excel sheet overlay -->
  <div class="absolute left-[496px] top-[337px] h-[383px] w-[784px] overflow-hidden border-l border-t border-[#4a4aa0] bg-white font-['Liberation_Sans',sans-serif] text-black blur-[0.4px]">
    <div class="h-[15px] pl-[300px] pt-[1px] text-[11.300px] font-bold leading-[14px] text-[#d0202a]">CALENDARIO DE AVANCE DE OBRA VALORIZADO</div>
    <div class="h-[50px] pl-[1px] text-[6.400px] font-bold leading-[10px] whitespace-nowrap">
      <div class="pt-[2px]">▶ &nbsp;PROYECTO &nbsp;: CREACION DEL POLIDEPORTIVO EN LA LOCALIDAD DE SAN ANTONIO DE CHUCCHUC DEL DISTRITO DE COLPAS - PROVINCIA DE AMBO - DEPARTAMENTO DE HUANUCO</div>
      <div>▶ &nbsp;PROPIETARIO : MUNICIPALIDAD DISTRITAL DE COLPAS</div>
      <div>▶ &nbsp;LUGAR : LOCALIDAD DE SAN ANTONIO DE CHUCCHUC</div>
      <div>▶ &nbsp;PLAZO DE EJECUCION : 120 DIAS</div>
    </div>
    <!-- sheet table -->
    <div class="font-['DejaVu_Sans',sans-serif] text-[5.400px] leading-[9px]
      [&>div]:grid [&>div]:grid-cols-[62px_307px_35px_33px_46px_56px_49px_50px_49px_50px_49px]
      [&>div>span]:overflow-hidden [&>div>span]:whitespace-nowrap [&>div>span]:border-r [&>div>span]:border-[#444] [&>div>span]:px-[1px] [&>div>span]:text-right
      [&>div>span:nth-child(1)]:text-left [&>div>span:nth-child(2)]:text-left [&>div>span:nth-child(3)]:text-left
      [&>div>span:nth-child(1)]:border-r-2 [&>div>span:nth-child(1)]:border-black [&>div>span:nth-child(2)]:border-r-2 [&>div>span:nth-child(2)]:border-black [&>div>span:nth-child(5)]:border-r-2 [&>div>span:nth-child(5)]:border-black [&>div>span:nth-child(6)]:border-r-2 [&>div>span:nth-child(6)]:border-black [&>div>span:nth-child(9)]:border-r-2 [&>div>span:nth-child(9)]:border-black
      [&>div]:border-b [&>div]:border-[#808080] [&>div]:h-[9.170px]
      [&>div>span:nth-child(3)]:text-[6px]
      [&>div:not(.font-bold)>span:nth-child(1)]:text-[4.200px] [&>div:not(.font-bold)>span:nth-child(2)]:font-['Liberation_Sans',sans-serif] [&>div:not(.font-bold)>span:nth-child(2)]:text-[6.100px]
      [&>div.font-bold>span]:text-[5px] [&>div.font-bold>span:nth-child(2)]:text-[5.400px]">
      <div class="!h-[19px] !border-y-2 !border-[#0b3a66] bg-[#0870bd] font-bold text-[#1c4a78] [&>span]:!text-center [&>span]:!text-[6px] [&>span]:leading-[16px]">
        <span>ITEM</span><span>NOMBRE DE LA TAREA</span><span>UNIDAD</span><span>METRADO</span><span>COSTO</span><span>TOTAL</span><span>ENERO</span><span>FEBRERO</span><span>MARZO</span><span>ABRIL</span><span class="!text-left !leading-[8px]">DIAS<br>100 días</span>
      </div>
      <div class="!h-[20px] !border-b-2 !border-black font-bold [&>span]:leading-[18px]">
        <span class="!text-[6px]">1</span><span class="!text-[5.150px] !leading-[9px]">CREACION DEL POLIDEPORTIVO EN LA LOCALIDAD DE SAN ANTONIO DE CHUCCHUC<br>&nbsp;DEL DISTRITO DE COLPAS - PROVINCIA DE AMBO - DEPARTAMENTO DE HUANUCO</span><span></span><span></span><span></span><span class="!leading-[28px]">S/. &nbsp;&nbsp;616,744.00</span><span class="!leading-[28px]">S/. 159,268.06</span><span class="!leading-[28px]">S/. 111,024.45</span><span class="!leading-[28px]">S/. 177,417.05</span><span class="!leading-[28px]">S/. 167,734.02</span><span class="!leading-[28px]">S/. &nbsp;&nbsp;616,744.00</span>
      </div>
      <div class="font-bold text-[#cf2030]"><span class="!text-[6px]">01</span><span>OBRAS PROVISIONALES Y TRABAJOS PRELIMINARES</span><span></span><span></span><span></span><span>40,992.58</span><span>39,817.15</span><span></span><span></span><span>S/. &nbsp;&nbsp;1,175.43</span><span>40,992.58</span></div>
      <div class="font-bold text-[#12896a]"><span>01.01</span><span class="pl-[5px]!">OBRAS PROVISIONALES</span><span></span><span></span><span></span><span>31,163.43</span><span>29,987.99</span><span></span><span></span><span>S/. &nbsp;&nbsp;1,175.43</span><span>31,163.43</span></div>
      <div><span>01.01.01</span><span class="pl-[7px]!">ALQUILER DE ALMACEN, OFICINA Y GUARDIANIA</span><span>und</span><span>1.00</span><span>820.00</span><span>820.00</span><span>820.00</span><span></span><span></span><span></span><span>820.00</span></div>
      <div><span>01.01.02</span><span class="pl-[7px]!">CARTEL DE IDENTIFICACION DE LA OBRA DE 3.60 X 2.40M</span><span>und</span><span>1.00</span><span>822.57</span><span>822.57</span><span>822.57</span><span></span><span></span><span></span><span>822.57</span></div>
      <div><span>01.01.03</span><span class="pl-[7px]!">PLACA RECORDATORIA DE OBRA ACRILICO 0.55 X 0.45 SEGUN DISEÑO</span><span>und</span><span>1.00</span><span>675.43</span><span>675.43</span><span></span><span></span><span></span><span>S/. 675.43</span><span>675.43</span></div>
      <div><span>01.01.04</span><span class="pl-[7px]!">MOVILIZACION Y DESMOVILIZACION DE MAQUINARIA</span><span>glb</span><span>1.00</span><span>5,209.84</span><span>5,209.84</span><span>S/. &nbsp;&nbsp;5,209.84</span><span></span><span></span><span></span><span>5,209.84</span></div>
      <div><span>01.01.05</span><span class="pl-[7px]!">FLETE TERRESTRE</span><span>glb</span><span>1.00</span><span>23,135.58</span><span>23,135.58</span><span>S/. &nbsp;23,135.58</span><span></span><span></span><span></span><span>23,135.58</span></div>
      <div><span>01.01.06</span><span class="pl-[7px]!">LIMPIEZA FINAL DE OBRA</span><span>glb</span><span>1.00</span><span>500.00</span><span>500.00</span><span></span><span></span><span></span><span>S/. 500.00</span><span>500.00</span></div>
      <div class="font-bold text-[#12896a]"><span>01.02</span><span class="pl-[5px]!">TRABAJOS PRELIMINARES</span><span></span><span></span><span></span><span>9,829.15</span><span>S/. &nbsp;&nbsp;9,829.15</span><span></span><span></span><span></span><span>9,829.15</span></div>
      <div><span>01.02.01</span><span class="pl-[7px]!">LIMPIEZA DE TERRENO MANUAL</span><span>m2</span><span>1,528.27</span><span>1.29</span><span>1,971.47</span><span>S/. 1,971.47</span><span></span><span></span><span></span><span>1,971.47</span></div>
      <div><span>01.02.02</span><span class="pl-[7px]!">TRAZOS,NIVELES Y REPLANTEOS PRELIMINAR</span><span>m2</span><span>1,528.73</span><span>2.57</span><span>3,928.84</span><span>S/. 3,928.84</span><span></span><span></span><span></span><span>3,928.84</span></div>
      <div><span>01.02.03</span><span class="pl-[7px]!">TRAZO DURANTE LA EJECUCION DE LA OBRA</span><span>m2</span><span>1,528.73</span><span>2.57</span><span>3,928.84</span><span>S/. 3,928.84</span><span></span><span></span><span></span><span>3,928.84</span></div>
      <div class="font-bold text-[#cf2030]"><span>02</span><span>GRASS SINTETICO Y COBERTURA ALUZINC TR-4</span><span></span><span></span><span></span><span>209,320.91</span><span>S/. 104,771.04</span><span>S/. 43,301.55</span><span>S/. 141,248.32</span><span></span><span>209,320.91</span></div>
      <div class="font-bold text-[#12896a]"><span>02.01</span><span class="pl-[5px]!">GRASS SINTETICO</span><span></span><span></span><span></span><span>41,581.02</span><span>S/. 3,355.78</span><span>S/. 38,225.24</span><span></span><span></span><span>41,581.02</span></div>
      <div class="font-bold text-[#2a5db0]"><span>02.01.01</span><span class="pl-[10px]!">MOVIMIENTO DE TIERRAS</span><span></span><span></span><span></span><span>3,355.78</span><span>S/. &nbsp;&nbsp;3,355.78</span><span></span><span></span><span></span><span>3,355.78</span></div>
      <div><span>02.01.01.01</span><span class="pl-[10px]!">CORTE EN MATERIAL SUELTO CON MAQUINARIA</span><span>m3</span><span>220.00</span><span>3.58</span><span>787.60</span><span>S/. 787.60</span><span></span><span></span><span></span><span>787.60</span></div>
      <div><span>02.01.01.02</span><span class="pl-[10px]!">PERFILADO Y COMPACION FINAL DE PLATAFORMA C/MAQUINARIA</span><span>m2</span><span>1,047.96</span><span>1.75</span><span>1,833.93</span><span>S/. 1,833.93</span><span></span><span></span><span></span><span>1,833.93</span></div>
      <div><span>02.01.01.03</span><span class="pl-[10px]!">ELIMINACION DE MATERIAL EXCEDENTE C/MAQUINARIA..</span><span>m3</span><span>275.00</span><span>2.67</span><span>734.25</span><span>S/. 734.25</span><span></span><span></span><span></span><span>734.25</span></div>
      <div class="font-bold text-[#2a5db0]"><span>02.01.02</span><span class="pl-[10px]!">OBRAS DE CONCRETO SIMPLE</span><span></span><span></span><span></span><span>7,636.20</span><span></span><span>S/. 7,636.20</span><span></span><span></span><span>7,636.20</span></div>
      <div class="font-bold text-[#d426c8]"><span>02.01.02.01</span><span class="pl-[15px]!">SOLADO EN GRASS SINTETICO</span><span></span><span></span><span></span><span>7,636.20</span><span></span><span>S/. 7,636.20</span><span></span><span></span><span>7,636.20</span></div>
      <div><span>02.01.02.01.01</span><span class="pl-[13px]!">SOLADO PARA GRASS SINTETICO MEZCLA f'c = 110 Kg/cm2 h=2"</span><span>m2</span><span>390.00</span><span>19.58</span><span>7,636.20</span><span></span><span>S/. 7,636.20</span><span></span><span></span><span>7,636.20</span></div>
      <div class="font-bold text-[#2a5db0]"><span>02.01.03</span><span class="pl-[10px]!">PISOS</span><span></span><span></span><span></span><span>29,480.10</span><span></span><span>S/. 29,480.10</span><span></span><span></span><span>29,480.10</span></div>
      <div><span>02.01.03.01</span><span class="pl-[10px]!">PISO DE GRASS SINTETICO</span><span>m2</span><span>390.00</span><span>75.59</span><span>29,480.10</span><span></span><span>S/. 29,480.10</span><span></span><span></span><span>29,480.10</span></div>
      <div class="font-bold text-[#2a5db0]"><span>02.01.04</span><span class="pl-[10px]!">CARPINTERIA METALICA</span><span></span><span></span><span></span><span>1,108.94</span><span></span><span>S/. 1,108.94</span><span></span><span></span><span>1,108.94</span></div>
      <div><span>02.01.04.01</span><span class="pl-[10px]!">ARCO DE FULBITO S/DISEÑO</span><span>und</span><span>2.00</span><span>554.47</span><span>1,108.94</span><span></span><span>S/. 1,108.94</span><span></span><span></span><span>1,108.94</span></div>
      <div class="font-bold text-[#12896a]"><span>02.02</span><span class="pl-[5px]!">COBERTURA METALICA</span><span></span><span></span><span></span><span>247,739.89</span><span>S/. 101,415.26</span><span>S/. 5,076.31</span><span>S/. 141,248.32</span><span></span><span>247,739.89</span></div>
      <div class="font-bold text-[#2a5db0]"><span>02.02.01</span><span class="pl-[10px]!">ESTRUCTURAS</span><span></span><span></span><span></span><span>214,515.50</span><span>S/. 101,415.26</span><span>S/. 4,369.03</span><span>S/. 108,731.21</span><span></span><span>214,515.50</span></div>
      <div class="font-bold text-[#d426c8]"><span>02.02.01.01</span><span class="pl-[15px]!">MOVIMIENTO DE TIERRAS</span><span></span><span></span><span></span><span>9,124.87</span><span>S/. 9,124.87</span><span></span><span></span><span></span><span>9,124.87</span></div>
      <div><span>02.02.01.01.01</span><span class="pl-[13px]!">EXCAVACION DE ZANJAS PARA CIMIENTOS h=0.90m</span><span>m3</span><span>26.32</span><span>62.48</span><span>1,644.47</span><span>S/. 1,644.47</span><span></span><span></span><span></span><span>1,644.47</span></div>
      <div><span>02.02.01.01.02</span><span class="pl-[13px]!">EXCAVACION DE ZANJAS PARA ZAPATAS h=1.80m</span><span>m3</span><span>102.64</span><span>72.88</span><span>7,480.40</span><span>S/. 7,480.40</span><span></span><span></span><span></span><span>7,480.40</span></div>
    </div>
  </div>
  <div class="absolute left-[1035px] top-[335px] h-[2px] w-[50px] bg-[#0f5b6e]"></div>

  <!-- Project logo -->
  <svg class="absolute left-[75px] top-[399px]" width="333" height="315" viewBox="75 399 333 315" aria-label="Microsoft Project">
    <path d="M263 431h134a10 10 0 0 1 10 10v232a10 10 0 0 1-10 10H263z" fill="#05753a"/>
    <rect x="263" y="443" width="131" height="227" fill="#fff"/>
    <path d="M263 473h105v72h26l-36 40-35.500-40H348v-51h-85z" fill="#05753a"/>
    <path d="M263 607l39-40 41 40-41 41z" fill="#05753a"/>
    <path d="M75 434l188-35v314L75 679z" fill="#05753a"/>
    <path fill-rule="evenodd" d="M134 500h35c20 0 32 14 32 35s-14 36-33 36h-14v36l-20-1zM154 519v33h12c9 0 14-7 14-16s-5-17-14-17z" fill="#fff"/>
  </svg>

  <!-- Big overlay headline -->
  <div class="absolute left-[314px] top-[348px] whitespace-nowrap font-['DejaVu_Sans',sans-serif] text-[46px] font-bold leading-[54px] text-[#f3162e] [-webkit-text-stroke:1px_#f3162e] [text-shadow:5px_0_0_#6a6a6a,4.600px_1.900px_0_#6a6a6a,3.500px_3.500px_0_#6a6a6a,1.900px_4.600px_0_#6a6a6a,0_5px_0_#6a6a6a,-1.900px_4.600px_0_#6a6a6a,-3.500px_3.500px_0_#6a6a6a,-4.600px_1.900px_0_#6a6a6a,-5px_0_0_#6a6a6a,-4.600px_-1.900px_0_#6a6a6a,-3.500px_-3.500px_0_#6a6a6a,-1.900px_-4.600px_0_#6a6a6a,0_-5px_0_#6a6a6a,1.900px_-4.600px_0_#6a6a6a,3.500px_-3.500px_0_#6a6a6a,4.600px_-1.900px_0_#6a6a6a]">CRONOGRAMA VALORIZADO DE OBRA</div>
  <div class="absolute left-[612px] top-[430px] whitespace-nowrap font-['DejaVu_Sans',sans-serif] text-[53.300px] font-bold leading-[58px] text-[#f3162e] [-webkit-text-stroke:1px_#f3162e] [text-shadow:5px_0_0_#6a6a6a,4.600px_1.900px_0_#6a6a6a,3.500px_3.500px_0_#6a6a6a,1.900px_4.600px_0_#6a6a6a,0_5px_0_#6a6a6a,-1.900px_4.600px_0_#6a6a6a,-3.500px_3.500px_0_#6a6a6a,-4.600px_1.900px_0_#6a6a6a,-5px_0_0_#6a6a6a,-4.600px_-1.900px_0_#6a6a6a,-3.500px_-3.500px_0_#6a6a6a,-1.900px_-4.600px_0_#6a6a6a,0_-5px_0_#6a6a6a,1.900px_-4.600px_0_#6a6a6a,3.500px_-3.500px_0_#6a6a6a,4.600px_-1.900px_0_#6a6a6a]">FÁCIL Y RAPIDO!!!</div>
</div>
</body>
</html>
